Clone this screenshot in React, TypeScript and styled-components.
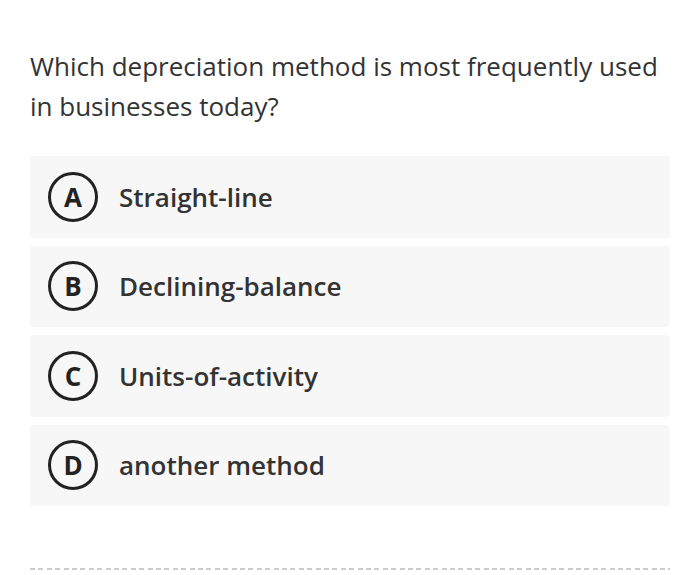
import React, { FC } from "react";
import styled, { createGlobalStyle } from "styled-components";

const GlobalStyle = createGlobalStyle`
  body {
    margin: 0;
    background: #ffffff;
    font-family: "Open Sans", "Noto Sans", sans-serif;
    color: #333333;
  }
`;

const Page = styled.div`
  padding: 46px 30px 0 30px;
  display: flex;
  flex-direction: column;
`;

const Question = styled.p`
  margin: 0;
  font-size: 26px;
  line-height: 40px;
  font-weight: 400;
  color: #333333;
`;

const OptionList = styled.div`
  margin-top: 30px;
  display: flex;
  flex-direction: column;
  gap: 8px;
`;

const OptionCard = styled.div`
  height: 81.5px;
  box-sizing: border-box;
  background: #f7f7f7;
  border-radius: 3px;
  display: flex;
  align-items: center;
  padding-left: 18px;
  gap: 21px;
`;

const Badge = styled.span`
  width: 50px;
  height: 50px;
  box-sizing: border-box;
  border: 3px solid #222222;
  border-radius: 50%;
  display: flex;
  align-items: center;
  justify-content: center;
  font-size: 26px;
  font-weight: 700;
  color: #222222;
`;

const OptionText = styled.span`
  font-size: 26px;
  font-weight: 600;
  color: #333333;
`;

const Divider = styled.div`
  margin-top: 62px;
  height: 2px;
  background: repeating-linear-gradient(
    to right,
    #cccccc 0 5px,
    transparent 5px 8.4px
  );
`;

interface Option {
  letter: string;
  text: string;
}

const options: Option[] = [
  { letter: "A", text: "Straight-line" },
  { letter: "B", text: "Declining-balance" },
  { letter: "C", text: "Units-of-activity" },
  { letter: "D", text: "another method" },
];

const App: FC = () => (
  <>
    <GlobalStyle />
    <Page>
      <Question>
        Which depreciation method is most frequently used in businesses today?
      </Question>
      <OptionList>
        {options.map((o) => (
          <OptionCard key={o.letter}>
            <Badge>{o.letter}</Badge>
            <OptionText>{o.text}</OptionText>
          </OptionCard>
        ))}
      </OptionList>
      <Divider />
    </Page>
  </>
);

export default App;
